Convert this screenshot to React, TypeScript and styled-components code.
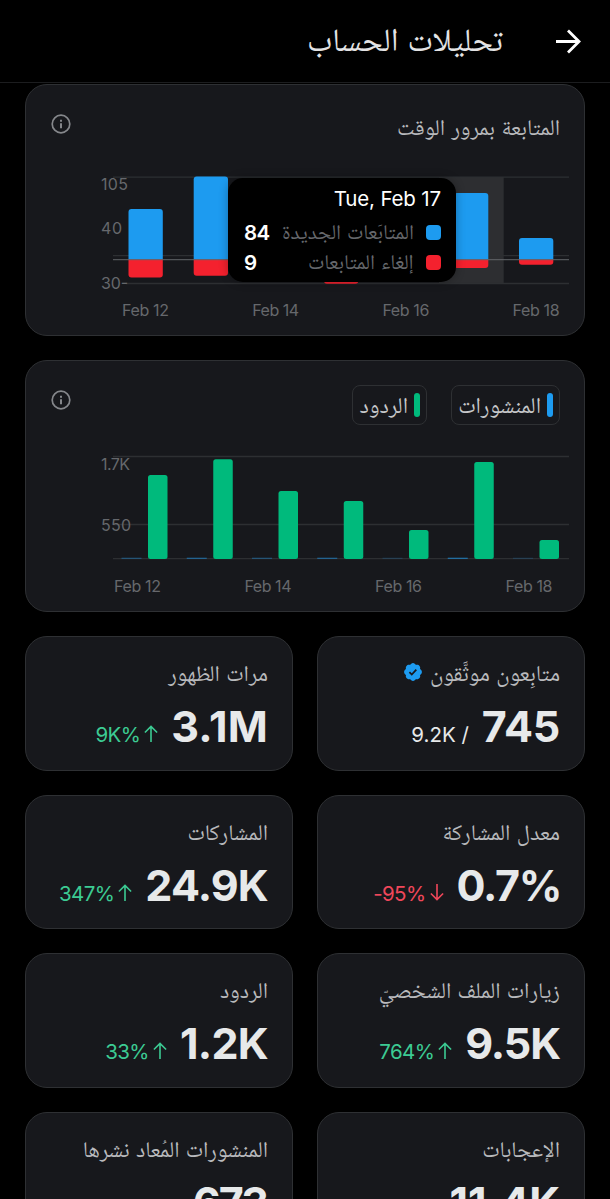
import React from "react";
import styled, { createGlobalStyle } from "styled-components";

const GlobalStyle = createGlobalStyle`
  * { box-sizing: border-box; }
  html, body { margin: 0; background: #000; }
  body { font-family: Inter, "Noto Naskh Arabic UI", "Noto Naskh Arabic", "DejaVu Sans", sans-serif; color: #e7e9ea; }
`;

const Page = styled.div`
  width: 610px;
  height: 1199px;
  overflow: hidden;
  background: #000;
  display: flex;
  flex-direction: column;
`;

const Header = styled.header`
  flex: none;
  height: 83px;
  border-bottom: 1px solid #1c1d1f;
  display: flex;
  align-items: center;
  gap: 53px;
  padding: 0 29px 0 0;
`;

const BackIcon = styled.svg`
  width: 25px;
  height: 25px;
  flex: none;
`;

const Title = styled.h1`
  margin: 3px 0 0;
  font-size: 32.6px;
  line-height: 40px;
  font-weight: 400;
  color: #e3e3e4;
`;

const Content = styled.main`
  flex: none;
  padding: 1px 25px 0;
  display: flex;
  flex-direction: column;
  gap: 24px;
`;

const Card = styled.section`
  position: relative;
  background: #17181c;
  border: 1px solid #2e3033;
  border-radius: 22px;
`;

const ChartCard = styled(Card)`
  height: 252px;
  display: flex;
  flex-direction: column;
`;

const CardHead = styled.div`
  height: 86px;
  flex: none;
  display: flex;
  justify-content: space-between;
  align-items: flex-start;
  padding: 24px 24px 0 25px;
`;

const CardTitle = styled.h2`
  margin: 6px 0 0;
  font-size: 22.35px;
  line-height: 30px;
  font-weight: 400;
  color: #b9babd;
`;

const InfoIcon = styled.svg`
  width: 20px;
  height: 20px;
  margin-top: 5px;
  flex: none;
`;

const Legends = styled.div`
  display: flex;
  gap: 24px;
`;

const Legend = styled.div<{ $width: number }>`
  width: ${(p) => p.$width}px;
  height: 40px;
  border: 1px solid #2e3033;
  border-radius: 8px;
  display: flex;
  align-items: center;
  gap: 6px;
  padding-right: 6px;
  white-space: nowrap;
  font-size: 22.5px;
  color: #c6c7c9;
`;

const LegendText = styled.span`
  padding-top: 4px;
`;

const LegendMark = styled.span<{ $color: string }>`
  flex: none;
  width: 6px;
  height: 24px;
  border-radius: 3px;
  background: ${(p) => p.$color};
`;

const Plot = styled.svg`
  display: block;
  width: 558px;
  height: 164px;
  text { font-family: Inter, sans-serif; font-size: 16px; fill: #66686c; }
`;

const Tooltip = styled.div`
  position: absolute;
  left: 202px;
  top: 93px;
  width: 228px;
  height: 104px;
  border-radius: 15px;
  background: #000;
  box-shadow: 0 0 10px rgba(0, 0, 0, 0.3);
  padding: 7px 15px 0 16px;
  display: flex;
  flex-direction: column;
`;

const TipDate = styled.div`
  height: 32px;
  line-height: 28px;
  font-size: 20.5px;
  letter-spacing: -0.15px;
  color: #fff;
`;

const TipRow = styled.div`
  height: 30px;
  display: flex;
  align-items: center;
  font-size: 21px;
  color: #66686c;
  white-space: nowrap;
`;

const TipText = styled.span`
  padding-top: 4px;
`;

const Swatch = styled.span<{ $color: string }>`
  width: 15px;
  height: 15px;
  flex: none;
  border-radius: 4px;
  margin-left: 12px;
  background: ${(p) => p.$color};
`;

const TipValue = styled.span`
  margin-right: auto;
  color: #fff;
  font-weight: 600;
  font-size: 20.5px;
  letter-spacing: -0.6px;
`;

const Grid = styled.div`
  display: grid;
  grid-template-columns: 268px 268px;
  grid-auto-rows: 134.7px;
  gap: 24px;
`;

const StatCard = styled(Card)`
  padding: 21px 24px 0;
`;

const StatLabel = styled.div`
  height: 32px;
  line-height: 32px;
  font-size: 22.35px;
  color: #b9babd;
  display: flex;
  align-items: flex-start;
  gap: 8px;
  white-space: nowrap;
`;

const LabelText = styled.span<{ $large?: boolean }>`
  padding-top: 2px;
  font-size: ${(p) => (p.$large ? 22.7 : 22.35)}px;
`;

const Badge = styled.svg`
  width: 18px;
  height: 18px;
  margin-top: 5px;
  flex: none;
`;

const StatLine = styled.div`
  display: flex;
  align-items: baseline;
  gap: 13px;
  margin-top: 9px;
  height: 54px;
  line-height: 54px;
  direction: rtl;
  white-space: nowrap;
`;

const StatValue = styled.span<{ $track: number; $shift: number }>`
  direction: ltr;
  font-size: 43px;
  font-weight: 700;
  letter-spacing: ${(p) => p.$track}px;
  margin-right: ${(p) => p.$shift}px;
  color: #e7e9ea;
`;

const StatNote = styled.span<{ $color: string; $track: number }>`
  direction: ltr;
  font-size: 20.5px;
  letter-spacing: ${(p) => p.$track}px;
  color: ${(p) => p.$color};
  display: inline-flex;
  align-items: baseline;
  gap: 4px;
`;

const Arrow = styled.svg`
  width: 14px;
  height: 17px;
`;

const GREEN = "#3ccb93";
const RED = "#f0475a";

function Info() {
  return (
    <InfoIcon viewBox="0 0 20 20" fill="none" stroke="#85878b" strokeWidth="1.7">
      <circle cx="10" cy="10" r="8.8" />
      <path d="M10 9.2v5M10 5.8v2" strokeWidth="2" />
    </InfoIcon>
  );
}

function Verified() {
  return (
    <Badge viewBox="1.5 1.5 19 19">
      <path
        fill="#1d9bf0"
        d="M20.396 11c-.018-.646-.215-1.275-.57-1.816-.354-.54-.852-.972-1.438-1.246.223-.607.27-1.264.14-1.897-.131-.634-.437-1.218-.882-1.687-.47-.445-1.053-.75-1.687-.882-.633-.13-1.29-.083-1.897.14-.273-.587-.704-1.086-1.245-1.44S11.647 1.62 11 1.604c-.646.017-1.273.213-1.813.568s-.969.854-1.24 1.44c-.608-.223-1.267-.272-1.902-.14-.635.13-1.22.436-1.69.882-.445.47-.749 1.055-.878 1.688-.13.633-.08 1.29.144 1.896-.587.274-1.087.705-1.443 1.245-.356.54-.555 1.17-.574 1.817.02.647.218 1.276.574 1.817.356.54.856.972 1.443 1.245-.224.606-.274 1.263-.144 1.896.13.634.433 1.218.877 1.688.47.443 1.054.747 1.687.878.633.132 1.29.084 1.897-.136.274.586.705 1.084 1.246 1.439.54.354 1.17.551 1.816.569.647-.016 1.276-.213 1.817-.567s.972-.854 1.245-1.44c.604.239 1.266.296 1.903.164.636-.132 1.22-.447 1.68-.907.46-.46.776-1.044.908-1.681s.075-1.299-.165-1.903c.586-.274 1.084-.705 1.439-1.246.354-.54.551-1.17.569-1.816z"
      />
      <path fill="none" stroke="#17181c" strokeWidth="1.9" d="M7.2 11.2l2.5 2.5 4.8-5.2" />
    </Badge>
  );
}

type Bar = { x: number; up: number; down: number };
const followBars: Bar[] = [
  { x: 102.5, up: 50.5, down: 18 },
  { x: 167.7, up: 83, down: 16.3 },
  { x: 298, up: 60, down: 24.2 },
  { x: 428, up: 66.5, down: 8.5 },
  { x: 493, up: 21.5, down: 5.3 },
];

/* A bar rounded only at its outer end. */
const barUp = (x: number, w: number, base: number, h: number) =>
  `M${x} ${base}v${-(h - 3)}q0-3 3-3h${w - 6}q3 0 3 3v${h - 3}z`;
const barDown = (x: number, w: number, base: number, h: number) =>
  `M${x} ${base}v${h - 3}q0 3 3 3h${w - 6}q3 0 3-3v${-(h - 3)}z`;

const dates = ["Feb 12", "Feb 14", "Feb 16", "Feb 18"];

function FollowChart() {
  return (
    <Plot viewBox="0 0 558 164" direction="ltr">
      <rect x="413" y="6" width="64.7" height="106" fill="#2d2e31" />
      <g stroke="#2d2f32" strokeWidth="1.3">
        <path d="M87 6.2H543M87 84.7H543M100 112.5H543" />
      </g>
      {followBars.map((b) => (
        <g key={b.x}>
          <path d={barUp(b.x, 34.3, 88.5, b.up)} fill="#1d9bf0" />
          <path d={barDown(b.x, 34.3, 88.5, b.down)} fill="#f4212e" />
        </g>
      ))}
      <path d="M87 88.6H543" stroke="#67696d" strokeOpacity="0.75" strokeWidth="1.3" />
      <text x="75" y="19" textLength="27">105</text>
      <text x="75" y="63" textLength="21">40</text>
      <text x="75" y="118" textLength="27">30-</text>
      {dates.map((d, i) => (
        <text key={d} x={96 + i * 130.2} y="145" textLength="47">{d}</text>
      ))}
    </Plot>
  );
}

const replies = [84, 99.7, 68, 58, 29, 97, 19];
const postOpacity = [0.4, 0.55, 0.4, 0.55, 0.2, 0.65, 0.2];

function RepliesChart() {
  return (
    <Plot viewBox="0 0 558 164" direction="ltr">
      <path d="M87 9.5H543M87 77.5H543M87 111.7H543" stroke="#2d2f32" strokeWidth="1.3" />
      {replies.map((h, i) => (
        <g key={i}>
          <rect x={95.5 + i * 65.25} y="110.7" width="20" height="1.2" fill="#1d9bf0" opacity={postOpacity[i]} />
          <rect x={122 + i * 65.25} y={112 - h} width="19.5" height={h} rx="2.5" fill="#00ba7c" />
        </g>
      ))}
      <text x="75" y="22.5" textLength="29">1.7K</text>
      <text x="75" y="83.5" textLength="30">550</text>
      {dates.map((d, i) => (
        <text key={d} x={88 + i * 130.5} y="144.5" textLength="47">{d}</text>
      ))}
    </Plot>
  );
}

type Stat = {
  label: string;
  value: string;
  track: number;
  shift?: number;
  note?: string;
  trend?: "up" | "down";
  verified?: boolean;
};
const stats: Stat[] = [
  { label: "متابِعون موثَّقون", value: "745", track: -0.3, note: "9.2K /", verified: true },
  { label: "مرات الظهور", value: "3.1M", track: 0.2, note: "9K%", trend: "up" },
  { label: "معدل المشاركة", value: "0.7%", track: -1.3, shift: -1, note: "-95%", trend: "down" },
  { label: "المشاركات", value: "24.9K", track: -0.8, note: "347%", trend: "up" },
  { label: "زيارات الملف الشخصيّ", value: "9.5K", track: -1.1, note: "764%", trend: "up" },
  { label: "الردود", value: "1.2K", track: -0.7, note: "33%", trend: "up" },
  { label: "الإعجابات", value: "11.4K", track: -0.2 },
  { label: "المنشورات المُعاد نشرها", value: "673", track: -1.9, shift: 1 },
];

function StatTile({ label, value, track, shift = 0, note, trend, verified }: Stat) {
  const color = trend === "up" ? GREEN : trend === "down" ? RED : "#e7e9ea";
  return (
    <StatCard>
      <StatLabel>
        <LabelText $large={verified}>{label}</LabelText>
        {verified && <Verified />}
      </StatLabel>
      <StatLine>
        <StatValue $track={track} $shift={shift}>{value}</StatValue>
        {note && (
          <StatNote $color={color} $track={trend ? -0.6 : 0}>
            <span>{note}</span>
            {trend && (
              <Arrow viewBox="0 0 14 17" fill="none" stroke={color} strokeWidth="1.6">
                <path d={trend === "up" ? "M7 17V1.5M.9 7.5L7 1.4l6.1 6.1" : "M7 0v15.5M.9 9.5L7 15.6l6.1-6.1"} />
              </Arrow>
            )}
          </StatNote>
        )}
      </StatLine>
    </StatCard>
  );
}

export default function App() {
  return (
    <Page dir="rtl">
      <GlobalStyle />
      <Header>
        <BackIcon viewBox="0 0 25 25" fill="none" stroke="#fff" strokeWidth="2.8">
          <path d="M0 12.5h23M12 1.5l11 11-11 11" />
        </BackIcon>
        <Title>تحليلات الحساب</Title>
      </Header>
      <Content>
        <ChartCard>
          <CardHead>
            <CardTitle>المتابعة بمرور الوقت</CardTitle>
            <Info />
          </CardHead>
          <FollowChart />
          <Tooltip>
            <TipDate><bdi>Tue, Feb 17</bdi></TipDate>
            <TipRow>
              <Swatch $color="#1d9bf0" />
              <TipText>المتابَعات الجديدة</TipText>
              <TipValue>84</TipValue>
            </TipRow>
            <TipRow>
              <Swatch $color="#f4212e" />
              <TipText>إلغاء المتابعات</TipText>
              <TipValue>9</TipValue>
            </TipRow>
          </Tooltip>
        </ChartCard>
        <ChartCard>
          <CardHead>
            <Legends>
              <Legend $width={109}>
                <LegendMark $color="#1d9bf0" />
                <LegendText>المنشورات</LegendText>
              </Legend>
              <Legend $width={75}>
                <LegendMark $color="#00ba7c" />
                <LegendText>الردود</LegendText>
              </Legend>
            </Legends>
            <Info />
          </CardHead>
          <RepliesChart />
        </ChartCard>
        <Grid>
          {stats.map((s) => (
            <StatTile key={s.label} {...s} />
          ))}
        </Grid>
      </Content>
    </Page>
  );
}
